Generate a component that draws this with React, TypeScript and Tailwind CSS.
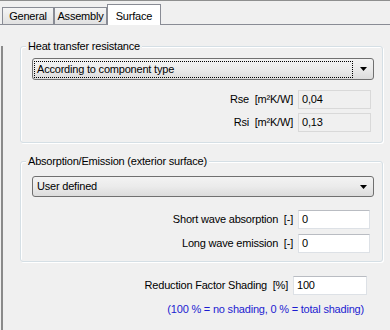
const font = "font-['Liberation_Sans',Arial,sans-serif] text-[11px] tracking-[-0.2px] text-black";

function Tab({ label, active, className }: { label: string; active?: boolean; className: string }) {
  if (active) {
    return (
      <div
        className={`relative -mb-px flex h-[21px] items-start justify-center border border-b-0 border-[#898c95] bg-white pt-[3px] ${className}`}
      >
        {label}
      </div>
    );
  }
  return (
    <div
      className={`flex h-[17px] items-center justify-center border border-b-0 border-[#898c95] bg-gradient-to-b from-[#f5f5f5] to-[#e1e1e1] ${className}`}
    >
      {label}
    </div>
  );
}

function Combo({ value, focused, height }: { value: string; focused?: boolean; height: string }) {
  return (
    <div
      className={`flex w-full items-center rounded-[3px] border border-[#707070] bg-gradient-to-b from-[#f3f3f3] via-[#ebebeb] to-[#dcdcdc] pl-[1px] pr-[5px] ${height}`}
    >
      <div
        className={`flex h-[17px] flex-1 items-center px-[2px] ${
          focused ? "border border-dotted border-black" : "border border-transparent"
        }`}
      >
        {value}
      </div>
      <svg width="7" height="4" viewBox="0 0 7 4" className="ml-[7px] mr-[1px]">
        <path d="M0 0h7L3.5 4z" fill="#000" />
      </svg>
    </div>
  );
}

function Field({
  label,
  unit,
  value,
  disabled,
  width,
}: {
  label: string;
  unit: string;
  value: string;
  disabled?: boolean;
  width: string;
}) {
  return (
    <div className="flex items-center justify-end">
      <span className="whitespace-pre">
        {label}
        {"  "}
        {unit}
      </span>
      <div
        className={`ml-[5px] flex h-[19px] items-center border px-[3px] ${width} ${
          disabled
            ? "border-[#d9d9d9] bg-[#f0f0f0]"
            : "border-[#dde1e6] border-t-[#b9bcc2] bg-white"
        }`}
      >
        {value}
      </div>
    </div>
  );
}

export default function App() {
  return (
    <div className={`h-[330px] w-[390px] overflow-hidden border-t border-[#8e8f8f] bg-[#f0f0f0] ${font}`}>
      {/* Tabs */}
      <div className="flex h-[24px] items-end border-b border-[#898c95] pl-[2px]">
        <Tab label="General" className="w-[52px]" />
        <Tab label="Assembly" className="w-[53px]" />
        <Tab label="Surface" active className="w-[54px]" />
      </div>

      {/* Panel */}
      <div className="ml-px h-[306px] border-l-2 border-[#8a8a8a]">
        {/* Heat transfer resistance */}
        <div className="relative ml-[17px] mt-[21px] h-[97px] w-[363px] rounded-[3px] border border-[#d5dfe5] pl-[11px] pr-[8px] pt-[11px] shadow-[inset_1px_1px_0_#fff,1px_1px_0_#fff]">
          <span className="absolute -top-[8px] left-[5px] bg-[#f0f0f0] px-[2px] leading-[14px]">
            Heat transfer resistance
          </span>
          <Combo value="According to component type" focused height="h-[22px]" />
          <div className="mt-[10px] flex flex-col gap-[4px] pr-[3px]">
            <Field label="Rse" unit="[m²K/W]" value="0,04" disabled width="w-[73px]" />
            <Field label="Rsi" unit="[m²K/W]" value="0,13" disabled width="w-[73px]" />
          </div>
        </div>

        {/* Absorption / Emission */}
        <div className="relative ml-[17px] mt-[18px] h-[101px] w-[363px] rounded-[3px] border border-[#d5dfe5] pl-[11px] pr-[8px] pt-[14px] shadow-[inset_1px_1px_0_#fff,1px_1px_0_#fff]">
          <span className="absolute -top-[8px] left-[5px] bg-[#f0f0f0] px-[2px] leading-[14px]">
            Absorption/Emission (exterior surface)
          </span>
          <Combo value="User defined" height="h-[21px]" />
          <div className="mt-[13px] flex flex-col gap-[5px] pr-[4px]">
            <Field label="Short wave absorption" unit="[-]" value="0" width="w-[72px]" />
            <Field label="Long wave emission" unit="[-]" value="0" width="w-[72px]" />
          </div>
        </div>

        {/* Reduction factor */}
        <div className="mt-[14px] pr-[23px]">
          <Field label="Reduction Factor Shading" unit="[%]" value="100" width="w-[74px]" />
        </div>
        <div className="mt-[8px] pr-[26px] text-right leading-[13px] text-[#1c1cd0]">
          (100 % = no shading, 0 % = total shading)
        </div>
      </div>
    </div>
  );
}
